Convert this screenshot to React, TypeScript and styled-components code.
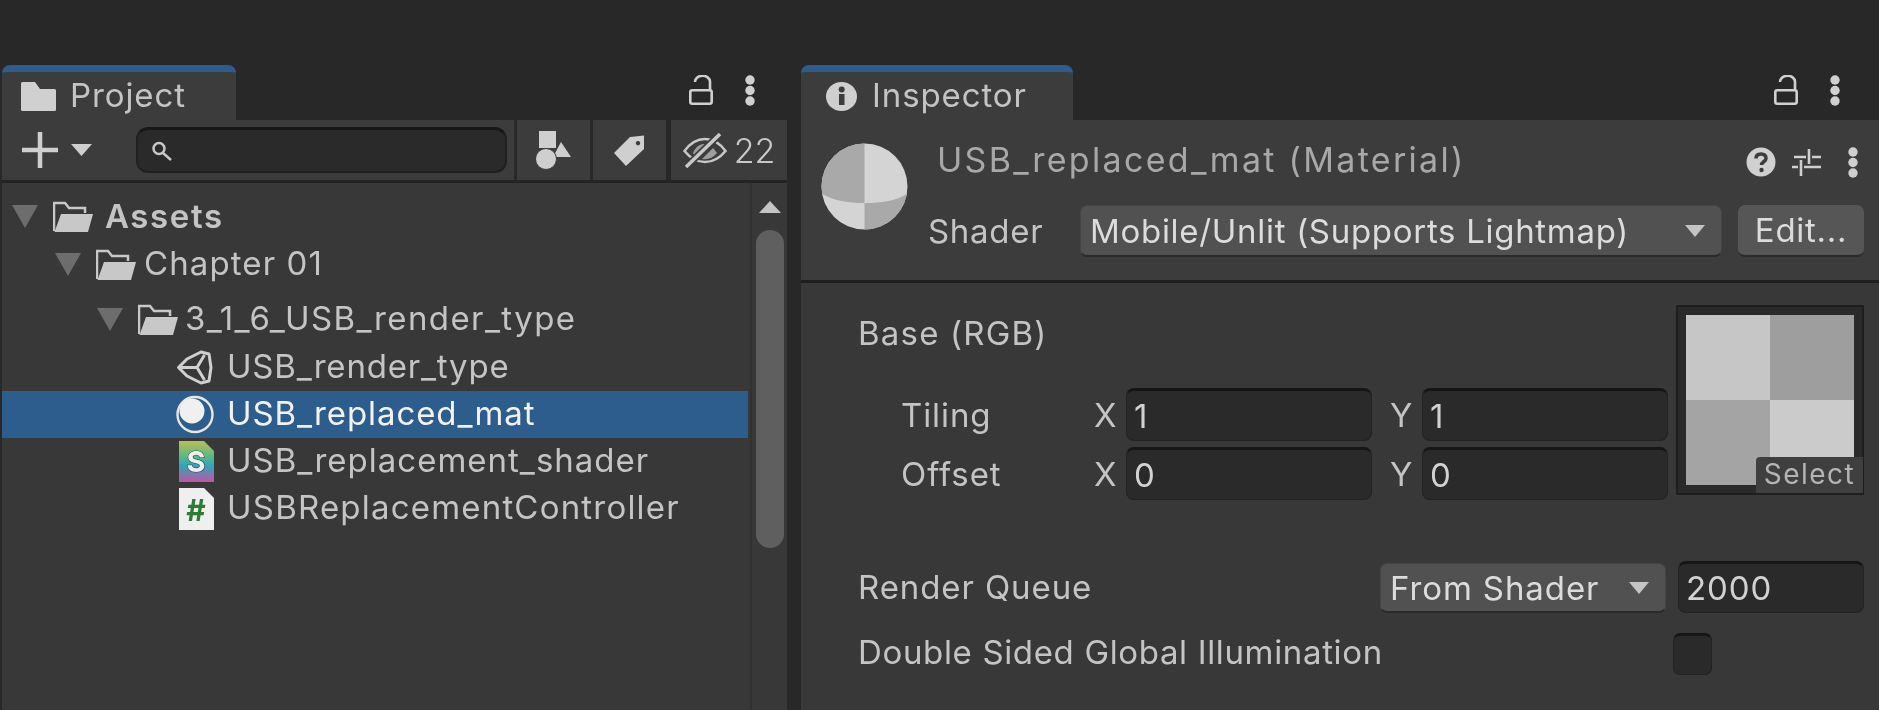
import styled, { createGlobalStyle } from 'styled-components';

const GlobalStyle = createGlobalStyle`
  html, body {
    margin: 0;
    padding: 0;
    height: 100%;
    background: #282828;
    overflow: hidden;
  }
  #root {
    height: 100%;
  }
`;

const Page = styled.div`
  display: flex;
  gap: 14px;
  height: 710px;
  padding: 65px 0 0 2px;
  box-sizing: border-box;
  background: #282828;
  font-family: Inter, "Liberation Sans", sans-serif;
  font-size: 33px;
  letter-spacing: 0.9px;
  color: #c8c8c8;
  filter: blur(0.5px);
`;

const Panel = styled.section<{ $width?: number }>`
  display: flex;
  flex-direction: column;
  flex: ${({ $width }) => ($width ? `0 0 ${$width}px` : '1')};
  min-width: 0;
`;

const TabStrip = styled.div`
  display: flex;
  align-items: flex-start;
  justify-content: space-between;
  height: 55px;
  flex-shrink: 0;
`;

const Tab = styled.div<{ $width: number; $pad: number; $gap: number }>`
  display: flex;
  align-items: center;
  gap: ${({ $gap }) => $gap}px;
  width: ${({ $width }) => $width}px;
  height: 55px;
  padding-left: ${({ $pad }) => $pad}px;
  box-sizing: border-box;
  background: #3c3c3c;
  border-top: 7px solid #2c5d8c;
  border-radius: 8px 8px 0 0;
  color: #c4c4c4;
`;

const TabLabel = styled.span`
  margin-bottom: 3px;
`;

const TabActions = styled.div<{ $right: number; $gap: number }>`
  display: flex;
  align-items: center;
  gap: ${({ $gap }) => $gap}px;
  height: 50px;
  margin-right: ${({ $right }) => $right}px;
`;

const Toolbar = styled.div`
  display: flex;
  gap: 3px;
  height: 63px;
  flex-shrink: 0;
  box-sizing: border-box;
  border-bottom: 3px solid #242424;
`;

const CreateArea = styled.div`
  display: flex;
  flex: 1;
  align-items: center;
  background: #3c3c3c;
  padding-left: 20px;
`;

const CreateButton = styled.div`
  display: flex;
  align-items: center;
  gap: 13px;
  width: 114px;
`;

const SearchField = styled.div`
  display: flex;
  align-items: center;
  width: 371px;
  height: 46px;
  box-sizing: border-box;
  padding-left: 13px;
  background: #2a2a2a;
  border: 2px solid #202020;
  border-top: 3px solid #171717;
  border-radius: 12px;
`;

const ToolButton = styled.div<{ $width: number; $lead?: number }>`
  display: flex;
  align-items: center;
  justify-content: center;
  gap: 7px;
  width: ${({ $width }) => $width}px;
  margin-left: ${({ $lead }) => $lead ?? 0}px;
  background: #3c3c3c;
  color: #c8c8c8;
  font-size: 34px;
  font-weight: 300;
  letter-spacing: 0;
`;

const ProjectBody = styled.div`
  display: flex;
  flex: 1;
  background: #383838;
`;

const Tree = styled.div`
  flex: 1;
  padding-top: 10px;
`;

const TreeRow = styled.div<{ $height: number; $top: number; $selected: boolean; $indent: number }>`
  display: flex;
  align-items: center;
  height: ${({ $height }) => $height}px;
  margin-top: ${({ $top }) => $top}px;
  padding-left: ${({ $indent }) => $indent}px;
  background: ${({ $selected }) => ($selected ? '#2c5d8c' : 'transparent')};
  color: ${({ $selected }) => ($selected ? '#f2f2f2' : '#c4c4c4')};
`;

const Disclosure = styled.span`
  flex: 0 0 26px;
  width: 0;
  height: 0;
  margin-right: 15px;
  box-sizing: border-box;
  border-left: 13px solid transparent;
  border-right: 13px solid transparent;
  border-top: 23px solid #6d6d6d;
`;

const RowIcon = styled.span<{ $width: number }>`
  display: flex;
  flex: 0 0 ${({ $width }) => $width}px;
  align-items: center;
`;

const RowLabel = styled.span<{ $bold: boolean; $spacing: number }>`
  margin-bottom: ${({ $bold }) => ($bold ? 1 : 4)}px;
  font-weight: ${({ $bold }) => ($bold ? 600 : 400)};
  letter-spacing: ${({ $spacing }) => $spacing}px;
  white-space: nowrap;
`;

const ScrollTrack = styled.div`
  display: flex;
  flex-direction: column;
  align-items: center;
  flex: 0 0 37px;
  box-sizing: border-box;
  padding-top: 18px;
  border-left: 2px solid #313131;
  margin-left: 2px;
`;

const ScrollArrow = styled.span`
  width: 0;
  height: 0;
  border-left: 11px solid transparent;
  border-right: 11px solid transparent;
  border-bottom: 12px solid #c4c4c4;
`;

const ScrollThumb = styled.div`
  width: 28px;
  height: 318px;
  margin-top: 17px;
  background: #5f5f5f;
  border-radius: 14px;
`;

const InspectorHeader = styled.div`
  display: flex;
  gap: 20px;
  height: 163px;
  flex-shrink: 0;
  box-sizing: border-box;
  padding: 23px 15px 0 20px;
  background: #3c3c3c;
  border-bottom: 3px solid #1f1f1f;
`;

const HeaderColumn = styled.div`
  flex: 1;
  display: flex;
  flex-direction: column;
  margin-top: -5px;
  min-width: 0;
`;

const TitleRow = styled.div`
  display: flex;
  align-items: center;
  justify-content: space-between;
  height: 48px;
  padding-left: 9px;
  color: #a8a8a8;
  white-space: pre;
`;

const TitleText = styled.span`
  margin-bottom: 5px;
  font-size: 34px;
  letter-spacing: 2.3px;
`;

const TitleActions = styled.div`
  display: flex;
  align-items: center;
  gap: 16px;
  margin-right: 6px;

  & > :last-child {
    margin-left: 11px;
  }
`;

const ShaderRow = styled.div`
  display: flex;
  align-items: center;
  gap: 16px;
  height: 52px;
  margin-top: 19px;
  letter-spacing: 0.7px;
`;

const ShaderLabel = styled.span`
  flex: 0 0 136px;
  color: #c4c4c4;
`;

const Dropdown = styled.div<{ $width?: number; $height: number }>`
  display: flex;
  align-items: center;
  justify-content: space-between;
  flex: ${({ $width }) => ($width ? `0 0 ${$width}px` : '1')};
  height: ${({ $height }) => $height}px;
  box-sizing: border-box;
  padding: 0 16px 0 9px;
  background: #515151;
  border: 1px solid #444444;
  border-bottom: 2px solid #2a2a2a;
  border-radius: 7px;
  color: #dcdcdc;
  white-space: nowrap;
`;

const DownArrow = styled.span`
  width: 0;
  height: 0;
  border-left: 10px solid transparent;
  border-right: 10px solid transparent;
  border-top: 12px solid #c4c4c4;
`;

const EditButton = styled.div`
  display: flex;
  align-items: center;
  justify-content: center;
  flex: 0 0 126px;
  height: 52px;
  box-sizing: border-box;
  background: #565656;
  border-bottom: 2px solid #2a2a2a;
  border-radius: 7px;
  color: #dcdcdc;
`;

const InspectorBody = styled.div`
  flex: 1;
  box-sizing: border-box;
  padding: 22px 15px 0 57px;
  background: #383838;
  color: #c4c4c4;
`;

const TextureSection = styled.div`
  display: flex;
  gap: 8px;
`;

const TextureFields = styled.div`
  flex: 1;
  display: flex;
  flex-direction: column;
  gap: 6px;
`;

const BaseLabel = styled.div`
  display: flex;
  align-items: center;
  height: 55px;
  margin-bottom: 22px;
  letter-spacing: 1.2px;
`;

const VectorRow = styled.div`
  display: flex;
  align-items: center;
  height: 53px;
  padding-left: 43px;
`;

const VectorName = styled.span`
  flex: 0 0 193px;
  padding-top: 1px;
`;

const AxisLabel = styled.span<{ $lead?: number }>`
  flex: 0 0 32px;
  margin-left: ${({ $lead }) => $lead ?? 0}px;
  padding-top: 1px;
`;

const Field = styled.div<{ $width: number; $height: number }>`
  display: flex;
  align-items: center;
  flex: 0 0 ${({ $width }) => $width}px;
  height: ${({ $height }) => $height}px;
  box-sizing: border-box;
  padding-left: 7px;
  background: #2a2a2a;
  border: 1px solid #222222;
  border-top: 3px solid #161616;
  border-radius: 8px;
  color: #d2d2d2;
`;

const TextureBox = styled.div`
  position: relative;
  flex: 0 0 188px;
  height: 190px;
  box-sizing: border-box;
  padding: 8px;
  background: #2a2a2a;
  border: 2px solid #1e1e1e;
`;

const TextureGrid = styled.div`
  display: grid;
  grid-template-columns: 1fr 1fr;
  grid-template-rows: 1fr 1fr;
  height: 100%;
`;

const TextureCell = styled.div<{ $tone: string }>`
  background: ${({ $tone }) => $tone};
`;

const SelectBadge = styled.div`
  position: absolute;
  right: -1px;
  bottom: 0;
  width: 107px;
  height: 36px;
  padding-bottom: 3px;
  box-sizing: border-box;
  display: flex;
  align-items: center;
  justify-content: center;
  background: #3f3f3f;
  border-radius: 4px 0 0 0;
  color: #b4b4b4;
  font-size: 28px;
  letter-spacing: 1.5px;
`;

const RenderRow = styled.div`
  display: flex;
  align-items: flex-end;
  gap: 12px;
  height: 52px;
  margin-top: 61px;
`;

const RowName = styled.span<{ $lift?: number }>`
  flex: 1;
  align-self: center;
  margin-bottom: ${({ $lift }) => $lift ?? 0}px;
  white-space: nowrap;
`;

const ToggleRow = styled.div`
  display: flex;
  align-items: center;
  height: 42px;
  margin-top: 20px;
  letter-spacing: 0.65px;
`;

const Checkbox = styled.div`
  flex: 0 0 39px;
  height: 42px;
  margin-right: 152px;
  box-sizing: border-box;
  background: #2a2a2a;
  border: 1px solid #222222;
  border-top: 3px solid #161616;
  border-radius: 7px;
`;

const FolderClosedIcon = () => (
  <svg width="35" height="29" viewBox="0 0 35 29">
    <path d="M0 1.500A1.500 1.500 0 0 1 1.500 0H14l5 7h14.500A1.500 1.500 0 0 1 35 8.500V27.500A1.500 1.500 0 0 1 33.500 29H1.500A1.500 1.500 0 0 1 0 27.500Z" fill="#d0d0d0" />
  </svg>
);

const FolderOpenIcon = () => (
  <svg width="40" height="31" viewBox="0 0 40 31">
    <path d="M1 30V2h11l4 5h16v5" fill="none" stroke="#c8c8c8" strokeWidth="2.500" />
    <path d="M1.500 31L8 13h32l-5 18Z" fill="#c8c8c8" />
  </svg>
);

const LockIcon = () => (
  <svg width="24" height="30" viewBox="0 0 24 30">
    <path d="M6 7A7.500 6 0 0 1 21 6.500V15" fill="none" stroke="#d0d0d0" strokeWidth="2.600" />
    <rect x="1.300" y="15.300" width="21.400" height="13.400" rx="2" fill="none" stroke="#d0d0d0" strokeWidth="2.600" />
  </svg>
);

const MoreIcon = () => (
  <svg width="10" height="31" viewBox="0 0 10 31">
    <circle cx="5" cy="5" r="4.700" fill="#d0d0d0" />
    <circle cx="5" cy="15.500" r="4.700" fill="#d0d0d0" />
    <circle cx="5" cy="26" r="4.700" fill="#d0d0d0" />
  </svg>
);

const PlusIcon = () => (
  <svg width="36" height="36" viewBox="0 0 36 36">
    <path d="M0 18H36M18 0V36" stroke="#cfcfcf" strokeWidth="4.500" />
  </svg>
);

const SearchIcon = () => (
  <svg width="22" height="20" viewBox="0 0 22 20">
    <circle cx="8" cy="7.500" r="5.500" fill="none" stroke="#c8c8c8" strokeWidth="2.500" />
    <path d="M12 12L20 19" stroke="#c8c8c8" strokeWidth="2.500" />
  </svg>
);

const FilterTypeIcon = () => (
  <svg width="36" height="39" viewBox="0 0 36 39">
    <path d="M25 11L35 26H17Z" fill="#cfcfcf" />
    <rect x="3" y="0" width="17" height="17" fill="#cfcfcf" />
    <circle cx="10" cy="28" r="10.500" fill="#cfcfcf" stroke="#3c3c3c" strokeWidth="1" />
  </svg>
);

const TagIcon = () => (
  <svg width="31" height="31" viewBox="0 0 31 31">
    <path fillRule="evenodd" d="M16 2L30 0.500V14L12 31L0 18ZM24 6a2.200 2.200 0 1 0 0.010 0Z" fill="#cfcfcf" />
  </svg>
);

const HiddenIcon = () => (
  <svg width="44" height="35" viewBox="0 0 44 35">
    <path d="M1.500 18C8 9 15 6 22 6S36 9 42.500 18C36 26 29 29 22 29S8 26 1.500 18Z" fill="none" stroke="#c8c8c8" strokeWidth="2.500" />
    <path d="M10 20C13 13 17 11 22 11L14 25C12 24 11 22 10 20ZM19 26L30 15C32 17 33 19 34 20C30 25 25 27 19 26Z" fill="#c8c8c8" opacity="0.700" />
    <path d="M3 34L37 1" stroke="#3c3c3c" strokeWidth="7" />
    <path d="M3 34L37 1" stroke="#c8c8c8" strokeWidth="3.500" />
  </svg>
);

const UnityIcon = () => (
  <svg width="37" height="35" viewBox="0 0 37 35">
    <path
      d="M2.500 17.500L11 9L25 2L33 4L35 17.500L33 31L25 33L11 26ZM2.500 17.500H21M21 17.500L28.500 5M21 17.500L28.500 30"
      fill="none"
      stroke="#d0d0d0"
      strokeWidth="3"
      strokeLinejoin="round"
    />
  </svg>
);

const MaterialIcon = () => (
  <svg width="38" height="39" viewBox="0 0 38 39">
    <circle cx="19" cy="19.500" r="17.500" fill="none" stroke="#e6e6e6" strokeWidth="2.400" />
    <circle cx="16" cy="16" r="12.500" fill="#f0f0f0" />
  </svg>
);

const ShaderIcon = () => (
  <svg width="35" height="41" viewBox="0 0 35 41">
    <defs>
      <linearGradient id="shaderFill" x1="0" y1="0" x2="0" y2="1">
        <stop offset="0" stopColor="#b9bf55" />
        <stop offset="0.300" stopColor="#6dbb7a" />
        <stop offset="0.600" stopColor="#2fa7b8" />
        <stop offset="1" stopColor="#c452a4" />
      </linearGradient>
    </defs>
    <path d="M0 0H25L35 10V41H0Z" fill="url(#shaderFill)" />
    <text x="17.500" y="31" textAnchor="middle" fontFamily="Inter, sans-serif" fontSize="29" fontWeight="700" fill="#eeeeee" stroke="#27455a" strokeWidth="1.200" paintOrder="stroke">S</text>
  </svg>
);

const ScriptIcon = () => (
  <svg width="35" height="42" viewBox="0 0 35 42">
    <path d="M0 0H25L35 10V42H0Z" fill="#efefef" />
    <text x="17.500" y="33" textAnchor="middle" fontFamily="Inter, sans-serif" fontSize="30" fontWeight="700" fill="#2a7d32">#</text>
  </svg>
);

const InfoIcon = () => (
  <svg width="31" height="29" viewBox="0 0 31 29">
    <ellipse cx="15.500" cy="14.500" rx="15.500" ry="14.500" fill="#cfcfcf" />
    <rect x="13" y="12" width="5.500" height="11" fill="#3c3c3c" />
    <circle cx="15.700" cy="7.500" r="3" fill="#3c3c3c" />
  </svg>
);

const HelpIcon = () => (
  <svg width="30" height="30" viewBox="0 0 30 30">
    <circle cx="15" cy="15" r="14.500" fill="#d0d0d0" />
    <path d="M10 11.500C10 8.500 12 7 15 7s5 1.500 5 4.500c0 3-4.500 3.500-4.500 6.500" fill="none" stroke="#3c3c3c" strokeWidth="3.500" />
    <circle cx="15.500" cy="23" r="2.200" fill="#3c3c3c" />
  </svg>
);

const PresetsIcon = () => (
  <svg width="29" height="28" viewBox="0 0 29 28">
    <path d="M2 9H14M20 9H29M17 1V16M0 19H6M12 19H29M9 12V28" stroke="#cfcfcf" strokeWidth="2.600" />
  </svg>
);

const SphereIcon = () => (
  <svg width="87" height="87" viewBox="0 0 87 87">
    <defs>
      <clipPath id="sphereClip">
        <circle cx="43.500" cy="43.500" r="43" />
      </clipPath>
    </defs>
    <g clipPath="url(#sphereClip)">
      <rect width="87" height="87" fill="#d4d4d4" />
      <path d="M0 50C12 58 28 60 43.500 60V0H0Z" fill="#a9a9a9" />
      <path d="M43.500 60C60 60 76 58 87 50V87H43.500Z" fill="#a9a9a9" />
    </g>
  </svg>
);

const treeRows = [
  { name: 'Assets', indent: 10, icon: <FolderOpenIcon />, iconWidth: 52, height: 47, top: 0, spacing: 1.6, bold: true, open: true },
  { name: 'Chapter 01', indent: 53, icon: <FolderOpenIcon />, iconWidth: 48, height: 47, top: 1, spacing: 1.1, open: true },
  { name: '3_1_6_USB_render_type', indent: 95, icon: <FolderOpenIcon />, iconWidth: 47, height: 49, top: 7, spacing: 1.4, open: true },
  { name: 'USB_render_type', indent: 174, icon: <UnityIcon />, iconWidth: 51, height: 47, top: 0, spacing: 0.8 },
  { name: 'USB_replaced_mat', indent: 174, icon: <MaterialIcon />, iconWidth: 51, height: 47, top: 0, spacing: 0.9, selected: true },
  { name: 'USB_replacement_shader', indent: 177, icon: <ShaderIcon />, iconWidth: 48, height: 47, top: 0, spacing: 1 },
  { name: 'USBReplacementController', indent: 177, icon: <ScriptIcon />, iconWidth: 48, height: 47, top: 0, spacing: 1.2 },
];

const App = () => {
  return (
    <>
      <GlobalStyle />
      <Page>
        <Panel $width={785}>
          <TabStrip>
            <Tab $width={234} $pad={19} $gap={14}>
              <FolderClosedIcon />
              <TabLabel>Project</TabLabel>
            </Tab>
            <TabActions $right={32} $gap={32}>
              <LockIcon />
              <MoreIcon />
            </TabActions>
          </TabStrip>
          <Toolbar>
            <CreateArea>
              <CreateButton>
                <PlusIcon />
                <svg width="21" height="12" viewBox="0 0 21 12">
                  <path d="M0 0H21L10.500 12Z" fill="#cfcfcf" />
                </svg>
              </CreateButton>
              <SearchField>
                <SearchIcon />
              </SearchField>
            </CreateArea>
            <ToolButton $width={73}>
              <FilterTypeIcon />
            </ToolButton>
            <ToolButton $width={73}>
              <TagIcon />
            </ToolButton>
            <ToolButton $width={116} $lead={2}>
              <HiddenIcon />
              22
            </ToolButton>
          </Toolbar>
          <ProjectBody>
            <Tree>
              {treeRows.map((row) => (
                <TreeRow
                  key={row.name}
                  $height={row.height}
                  $top={row.top}
                  $indent={row.indent}
                  $selected={!!row.selected}
                >
                  {row.open && <Disclosure />}
                  <RowIcon $width={row.iconWidth}>{row.icon}</RowIcon>
                  <RowLabel $bold={!!row.bold} $spacing={row.spacing}>{row.name}</RowLabel>
                </TreeRow>
              ))}
            </Tree>
            <ScrollTrack>
              <ScrollArrow />
              <ScrollThumb />
            </ScrollTrack>
          </ProjectBody>
        </Panel>
        <Panel>
          <TabStrip>
            <Tab $width={272} $pad={25} $gap={15}>
              <InfoIcon />
              <TabLabel>Inspector</TabLabel>
            </Tab>
            <TabActions $right={39} $gap={32}>
              <LockIcon />
              <MoreIcon />
            </TabActions>
          </TabStrip>
          <InspectorHeader>
            <SphereIcon />
            <HeaderColumn>
              <TitleRow>
                <TitleText>USB_replaced_mat (Material)</TitleText>
                <TitleActions>
                  <HelpIcon />
                  <PresetsIcon />
                  <MoreIcon />
                </TitleActions>
              </TitleRow>
              <ShaderRow>
                <ShaderLabel>Shader</ShaderLabel>
                <Dropdown $height={52}>
                  Mobile/Unlit (Supports Lightmap)
                  <DownArrow />
                </Dropdown>
                <EditButton>Edit...</EditButton>
              </ShaderRow>
            </HeaderColumn>
          </InspectorHeader>
          <InspectorBody>
            <TextureSection>
              <TextureFields>
                <BaseLabel>Base (RGB)</BaseLabel>
                <VectorRow>
                  <VectorName>Tiling</VectorName>
                  <AxisLabel>X</AxisLabel>
                  <Field $width={246} $height={53}>1</Field>
                  <AxisLabel $lead={18}>Y</AxisLabel>
                  <Field $width={246} $height={53}>1</Field>
                </VectorRow>
                <VectorRow>
                  <VectorName>Offset</VectorName>
                  <AxisLabel>X</AxisLabel>
                  <Field $width={246} $height={53}>0</Field>
                  <AxisLabel $lead={18}>Y</AxisLabel>
                  <Field $width={246} $height={53}>0</Field>
                </VectorRow>
              </TextureFields>
              <TextureBox>
                <TextureGrid>
                  <TextureCell $tone="#c6c6c6" />
                  <TextureCell $tone="#9e9e9e" />
                  <TextureCell $tone="#a4a4a4" />
                  <TextureCell $tone="#cbcbcb" />
                </TextureGrid>
                <SelectBadge>Select</SelectBadge>
              </TextureBox>
            </TextureSection>
            <RenderRow>
              <RowName>Render Queue</RowName>
              <Dropdown $width={286} $height={50}>
                From Shader
                <DownArrow />
              </Dropdown>
              <Field $width={186} $height={52}>2000</Field>
            </RenderRow>
            <ToggleRow>
              <RowName $lift={5}>Double Sided Global Illumination</RowName>
              <Checkbox />
            </ToggleRow>
          </InspectorBody>
        </Panel>
      </Page>
    </>
  );
};

export default App;
